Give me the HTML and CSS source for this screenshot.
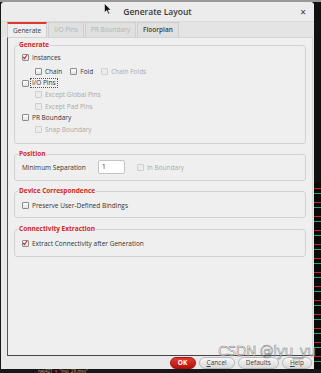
FILE: index.html
```html
<!DOCTYPE html>
<html lang="en">
<head>
    <meta charset="UTF-8">
    <meta name="viewport" content="width=device-width, initial-scale=1.0">
    <title>Generate Layout</title>
    <link rel="stylesheet" href="styles.css">
</head>
<body>
    <div class="desk">
        <div class="dialog">
            <div class="titlebar">
                <span class="title">Generate Layout</span>
                <span class="close">×</span>
            </div>

            <div class="tabs">
                <div class="tab active">Generate</div>
                <div class="tab off">I/O Pins</div>
                <div class="tab off">PR Boundary</div>
                <div class="tab">Floorplan</div>
            </div>

            <div class="pane">
                <fieldset class="group gen">
                    <legend>Generate</legend>
                    <div class="row"><span class="box on"><svg viewBox="0 0 8 8"><polyline points="1.5,4 3.3,6 6.8,1"/></svg></span>Instances</div>
                    <div class="row sub chain">
                        <span class="box"></span>Chain
                        <span class="box gap"></span>Fold
                        <span class="box gap off"></span><span class="dim">Chain Folds</span>
                    </div>
                    <div class="row"><span class="box"></span><span class="focus">I/O Pins</span></div>
                    <div class="row sub"><span class="box off"></span><span class="dim">Except Global Pins</span></div>
                    <div class="row sub"><span class="box off"></span><span class="dim">Except Pad Pins</span></div>
                    <div class="row"><span class="box"></span>PR Boundary</div>
                    <div class="row sub"><span class="box off"></span><span class="dim">Snap Boundary</span></div>
                </fieldset>

                <fieldset class="group pos">
                    <legend>Position</legend>
                    <div class="row field">
                        <span class="field-label">Minimum Separation</span>
                        <span class="input">1</span>
                        <span class="box off"></span><span class="dim">In Boundary</span>
                    </div>
                </fieldset>

                <fieldset class="group dev">
                    <legend>Device Correspondence</legend>
                    <div class="row"><span class="box"></span>Preserve User-Defined Bindings</div>
                </fieldset>

                <fieldset class="group con">
                    <legend>Connectivity Extraction</legend>
                    <div class="row"><span class="box on"><svg viewBox="0 0 8 8"><polyline points="1.5,4 3.3,6 6.8,1"/></svg></span>Extract Connectivity after Generation</div>
                </fieldset>
            </div>

            <div class="buttons">
                <button class="btn ok">OK</button>
                <button class="btn"><u>C</u>ancel</button>
                <button class="btn">Defaults</button>
                <button class="btn"><u>H</u>elp</button>
            </div>
        </div>
        <div class="strip"></div>
    </div>

    <div class="under">net421 <span class="pin">▼</span> "inst_28.mxx"</div>

    <!-- mouse pointer over the title bar -->
    <svg class="cursor" viewBox="0 0 8 12"><polygon points="0.5,0.5 0.5,9.5 2.7,7.6 4.3,11 5.6,10.4 4,7.1 7,7.1"/></svg>

    <div class="mark">CSDN @lyu_yu</div>
</body>
</html>
```

FILE: styles.css
```css
body {
    margin: 0;
    background: #181818;
    font-family: "Open Sans", "Noto Sans", sans-serif;
    font-size: 6.5px;
    color: #333;
    width: 321px;
    height: 373px;
    overflow: hidden;
    position: relative;
}
.desk {
    display: flex;
    padding-top: 2px;
    background: linear-gradient(#9a9a9a 0, #9a9a9a 2px, transparent 2px);
}
.dialog {
    width: 313px;
    height: 367px;
    margin-left: 1px;
    background: #e9e9e9;
    border-radius: 4px 4px 0 0;
    display: flex;
    flex-direction: column;
}
.strip {
    flex: 1;
    background:
        linear-gradient(#111, #111) 0 0 / 100% 180px no-repeat,
        repeating-linear-gradient(#0a0a0a 0 4px, #c22 4px 5px, #0a0a0a 5px 9px, #2a7 9px 10px, #0a0a0a 10px 14px);
}
.titlebar {
    height: 19px;
    display: flex;
    align-items: center;
    justify-content: center;
    position: relative;
    background: #ececec;
    border-bottom: 1px solid #dadada;
    border-radius: 4px 4px 0 0;
}
.title {
    font-size: 8.5px;
    font-weight: 600;
    color: #3a3a3a;
}
.close {
    position: absolute;
    right: 8px;
    top: 3px;
    font-size: 10px;
    color: #333;
}
.tabs {
    height: 15px;
    display: flex;
    padding-left: 6px;
    background: #e4e4e4;
}
.tab {
    padding: 0 5px;
    line-height: 14px;
    font-weight: 600;
    color: #3c3c3c;
    border: 1px solid #cfcfcf;
    border-bottom: none;
    background: #e0e0e0;
    margin-right: 1px;
}
.tab.active {
    background: #eeeeee;
    border-top: 2px solid #e0382f;
    line-height: 13px;
    font-weight: 400;
}
.tab.off {
    color: #b4b4b4;
    font-weight: 400;
}
.pane {
    height: 315px;
    margin: 0 1px 0 6px;
    padding: 2px 6px 0 6px;
    background: #efefef;
    border-left: 1px solid #555;
    border-bottom: 1px solid #444;
    border-top: 1px solid #d4d4d4;
    border-right: 1px solid #d8d8d8;
}
.group {
    margin: 0 0 5px 0;
    padding: 0;
    border: 1px solid #d2d2d2;
    border-radius: 3px;
    min-width: 0;
}
.group legend {
    margin-left: 3px;
    padding: 0 1px;
    line-height: 10px;
    font-weight: 700;
    color: #d5261e;
}
.gen { padding: 2px 0 8px; }
.pos { padding: 1px 0 6px; }
.dev { padding: 3px 0 6px; margin-bottom: 6px; }
.con { padding: 3px 0 7px; }
.row {
    height: 11.5px;
    display: flex;
    align-items: center;
    padding-left: 7px;
    white-space: nowrap;
}
.dev .row, .con .row { height: 12px; }
.row.sub { padding-left: 20px; }
.row.chain { margin-top: 2.5px; }
.box {
    width: 7px;
    height: 7px;
    box-sizing: border-box;
    border: 1px solid #8d8d8d;
    border-radius: 1px;
    background: linear-gradient(#ffffff, #e2e2e2);
    margin-right: 3px;
    flex: none;
    display: flex;
}
.box svg {
    width: 8px;
    height: 8px;
    margin: -2px 0 0 -1px;
    fill: none;
    stroke: #d42a22;
    stroke-width: 1.6;
}
.box.gap { margin-left: 8px; }
.box.off {
    border-color: #cfcfcf;
    background: #ececec;
}
.dim { color: #a9a9a9; }
.focus {
    border: 1px dotted #555;
    padding: 0 1px;
    line-height: 8px;
    margin-left: -2px;
}
.row.field { height: 14px; }
.field-label { width: 76px; }
.input {
    width: 27px;
    height: 14px;
    box-sizing: border-box;
    background: #fff;
    border: 1px solid #c4c4c4;
    border-radius: 2px;
    padding-left: 3px;
    line-height: 12px;
    margin-right: 12px;
}
.buttons {
    flex: 1;
    display: flex;
    justify-content: flex-end;
    align-items: center;
    gap: 3px;
    padding-right: 2px;
}
.btn {
    height: 12px;
    padding: 0 7px;
    font-family: inherit;
    font-size: 6.5px;
    color: #444;
    border: 1px solid #b9b9b9;
    border-radius: 6px;
    background: linear-gradient(#f7f7f7, #d9d9d9);
}
.btn.ok {
    width: 26px;
    color: #fff;
    font-weight: 700;
    border-color: #a51212;
    background: linear-gradient(#e23a32, #b8120e);
}
.under {
    position: absolute;
    left: 38px;
    top: 368px;
    font-size: 4.5px;
    color: #c9a27a;
}
.under .pin { color: #e22; }
.cursor {
    position: absolute;
    left: 104px;
    top: 3px;
    width: 8px;
    height: 12px;
    fill: #111;
    stroke: #eee;
    stroke-width: 0.6;
}
.mark {
    position: absolute;
    left: 218px;
    top: 343px;
    font-family: "DejaVu Sans", sans-serif;
    font-size: 14px;
    letter-spacing: -0.5px;
    color: rgba(255, 255, 255, 0.55);
    -webkit-text-stroke: 0.5px rgba(60, 60, 60, 0.7);
}
```
